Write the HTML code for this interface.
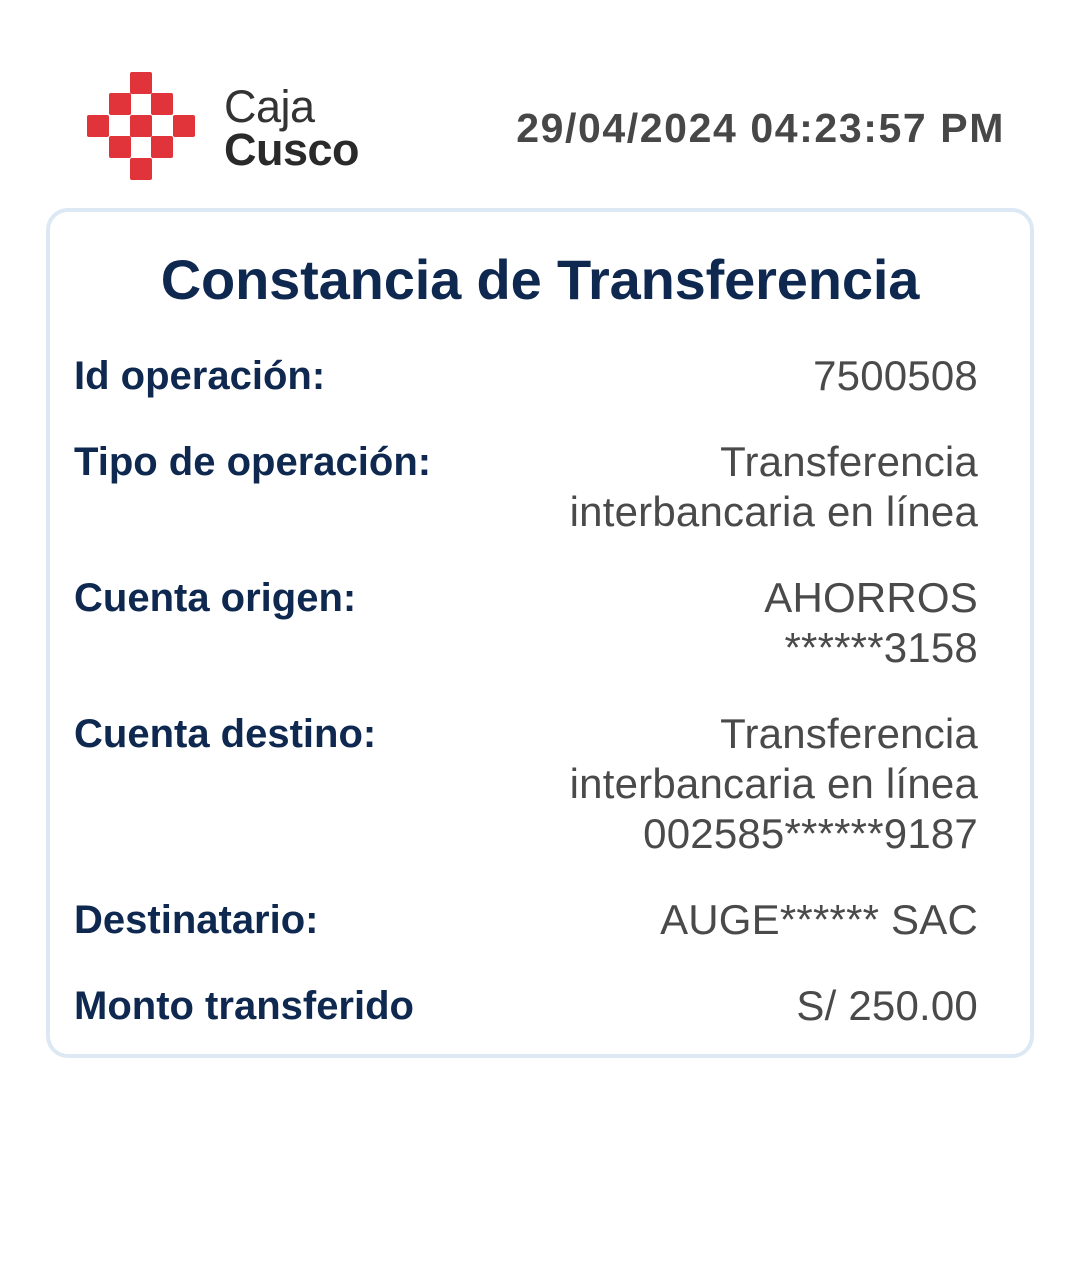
<!DOCTYPE html>
<html><head><meta charset="utf-8"><style>
html,body{margin:0;padding:0;background:#fff;}
body{width:1080px;height:1262px;position:relative;overflow:hidden;font-family:"Liberation Sans",Arial,sans-serif;}
.a{position:absolute;white-space:nowrap;line-height:50px;}
.l{left:74px;font-weight:bold;font-size:40px;color:#0e2850;letter-spacing:0;}
.v{right:102px;font-size:42px;color:#4a4a4a;letter-spacing:0.2px;text-align:right;}
.card{position:absolute;left:46px;top:208px;width:980px;height:842px;border:4px solid #dde8f5;border-radius:22px;}
.sq{position:absolute;width:22px;height:22px;background:#e0333a;border-radius:2px;}
</style></head><body>
<div style="position:absolute;left:87px;top:72px;width:108px;height:108px;">
<div class="sq" style="left:43px;top:0"></div>
<div class="sq" style="left:22px;top:21px"></div><div class="sq" style="left:64px;top:21px"></div>
<div class="sq" style="left:0;top:43px"></div><div class="sq" style="left:43px;top:43px"></div><div class="sq" style="left:86px;top:43px"></div>
<div class="sq" style="left:22px;top:64px"></div><div class="sq" style="left:64px;top:64px"></div>
<div class="sq" style="left:43px;top:86px"></div>
</div>
<div class="a" style="left:224px;top:82px;font-size:45px;color:#333;line-height:50px;letter-spacing:-0.5px;">Caja</div>
<div class="a" style="left:224px;top:125px;font-size:45px;font-weight:bold;color:#2a2a2a;line-height:50px;letter-spacing:-0.5px;">Cusco</div>
<div class="a" style="right:75px;top:103px;font-size:41px;font-weight:bold;color:#474747;letter-spacing:1.6px;">29/04/2024 04:23:57 PM</div>
<div class="card"></div>
<div class="a" style="left:0;width:1080px;text-align:center;top:250px;font-size:56px;font-weight:bold;color:#0e2850;line-height:60px;letter-spacing:-0.15px;">Constancia de Transferencia</div>
<div class="a l" style="top:351px">Id operación:</div>
<div class="a v" style="top:351px">7500508</div>
<div class="a l" style="top:437px">Tipo de operación:</div>
<div class="a v" style="top:437px">Transferencia<br>interbancaria en línea</div>
<div class="a l" style="top:573px">Cuenta origen:</div>
<div class="a v" style="top:573px">AHORROS<br>******3158</div>
<div class="a l" style="top:709px">Cuenta destino:</div>
<div class="a v" style="top:709px">Transferencia<br>interbancaria en línea<br>002585******9187</div>
<div class="a l" style="top:895px">Destinatario:</div>
<div class="a v" style="top:895px">AUGE****** SAC</div>
<div class="a l" style="top:981px">Monto transferido</div>
<div class="a v" style="top:981px">S/ 250.00</div>
</body></html>
